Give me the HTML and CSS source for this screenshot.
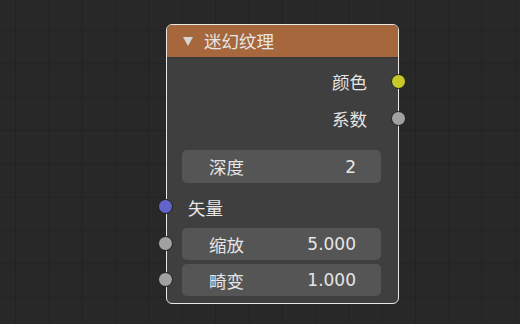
FILE: index.html
```html
<!DOCTYPE html>
<html>
<head>
<meta charset="utf-8">
<link rel="stylesheet" href="styles.css">
</head>
<body>
<div class="canvas">
  <div class="node">
    <div class="header">
      <span class="tri"></span>
      <span class="title">迷幻纹理</span>
    </div>
    <div class="body">
      <div class="row out"><span>颜色</span><i class="sock out-s yellow"></i></div>
      <div class="row out"><span>系数</span><i class="sock out-s grey"></i></div>
      <div class="field first"><span>深度</span><span class="num">2</span></div>
      <div class="row in"><i class="sock in-s blue"></i><span>矢量</span></div>
      <div class="field"><i class="sock in-s grey"></i><span>缩放</span><span class="num">5.000</span></div>
      <div class="field"><i class="sock in-s grey"></i><span>畸变</span><span class="num">1.000</span></div>
    </div>
  </div>
</div>
</body>
</html>
```

FILE: styles.css
```css
html, body {
  margin: 0;
  padding: 0;
  width: 520px;
  height: 324px;
  overflow: hidden;
}
.canvas {
  position: relative;
  width: 520px;
  height: 324px;
  background-color: #282828;
  background-image:
    linear-gradient(to right, #222222 1px, transparent 1px),
    linear-gradient(to bottom, #222222 1px, transparent 1px);
  background-size: 33.333px 33.333px;
  background-position: 15px 30px;
  font-family: "DejaVu Sans", "Noto Sans CJK SC", sans-serif;
  color: #e6e6e6;
  font-size: 17.5px;
}
.node {
  position: absolute;
  left: 166px;
  top: 24px;
  width: 231px;
  height: 278px;
  border: 1px solid #e8e8e8;
  border-radius: 6px;
  background: #3f3f3f;
  display: flex;
  flex-direction: column;
}
.header {
  height: 33px;
  background: #a6673d;
  border-radius: 5px 5px 0 0;
  display: flex;
  align-items: center;
  border-bottom: 1px solid #353535;
  box-sizing: border-box;
}
.tri {
  width: 0;
  height: 0;
  border-left: 5px solid transparent;
  border-right: 5px solid transparent;
  border-top: 9px solid #d6d6d6;
  margin-left: 16px;
  margin-right: 11px;
  margin-top: 0;
}
.title {
  font-size: 17.5px;
  margin-top: -1px;
}
.body {
  display: flex;
  flex-direction: column;
  padding: 5px 17px 0 15px;
}
.row {
  position: relative;
  height: 37px;
  display: flex;
  align-items: center;
}
.row.out {
  justify-content: flex-end;
  padding-right: 14px;
}
.row.in {
  height: 36px;
  margin-top: 6px;
  margin-bottom: 3px;
  padding-left: 6px;
}
.field {
  position: relative;
  height: 32px;
  background: #555555;
  border-radius: 5px;
  display: flex;
  align-items: center;
  justify-content: space-between;
  padding: 0 25px 0 27px;
  margin-bottom: 4px;
}
.field.first {
  margin-top: 13px;
  margin-bottom: 0;
  height: 33px;
}
.num {
  font-size: 17px;
}
.sock {
  position: absolute;
  width: 13px;
  height: 13px;
  border-radius: 50%;
  border: 1px solid #1c1c1c;
  top: 50%;
  margin-top: -8px;
}
.out-s {
  right: -25px;
}
.in-s {
  left: -24px;
}
.yellow { background: #c8c82a; }
.grey { background: #a1a1a1; }
.blue { background: #6363c8; }
```
